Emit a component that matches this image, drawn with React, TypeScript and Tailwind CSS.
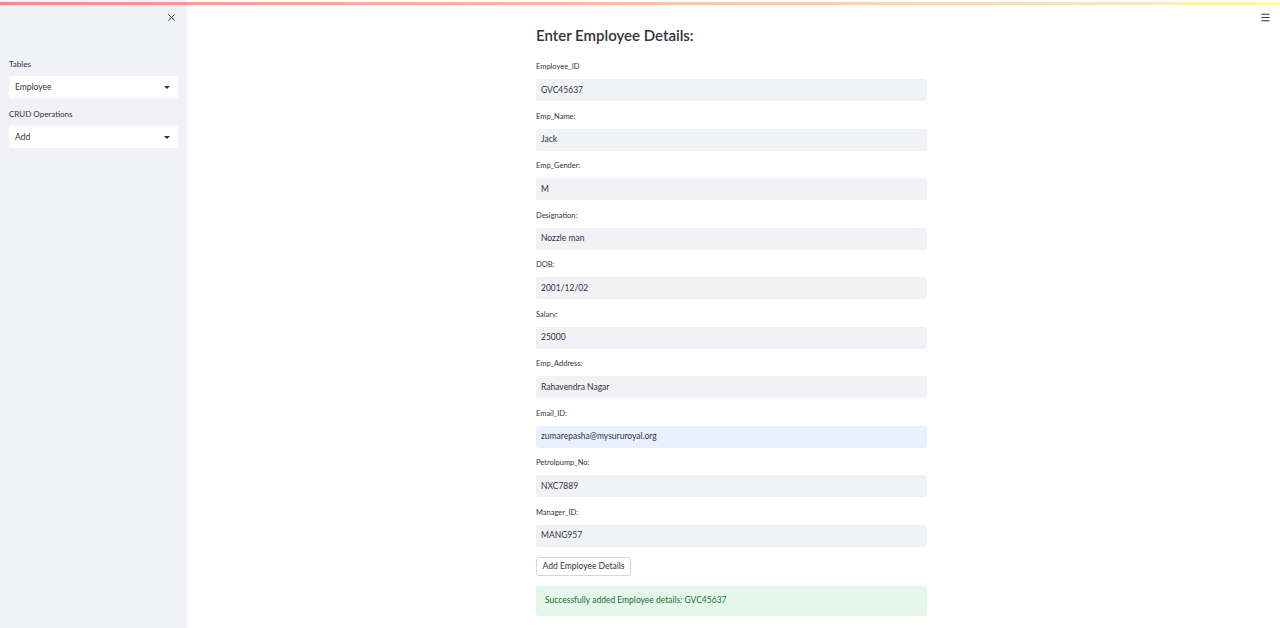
import { X, Menu } from 'lucide-react';

const fields = [
  { label: 'Employee_ID', value: 'GVC45637' },
  { label: 'Emp_Name:', value: 'Jack' },
  { label: 'Emp_Gender:', value: 'M' },
  { label: 'Designation:', value: 'Nozzle man' },
  { label: 'DOB:', value: '2001/12/02' },
  { label: 'Salary:', value: '25000' },
  { label: 'Emp_Address:', value: 'Rahavendra Nagar' },
  { label: 'Email_ID:', value: 'zumarepasha@mysururoyal.org', autofill: true },
  { label: 'Petrolpump_No:', value: 'NXC7889' },
  { label: 'Manager_ID:', value: 'MANG957' },
];

function SideSelect({ label, value }: { label: string; value: string }) {
  return (
    <div className="flex flex-col">
      <div className="h-[12px] leading-[12px] text-[8px] text-[#31333f] mb-[6px]">{label}</div>
      <div className="h-[22px] bg-white rounded-[3px] flex items-center justify-between pl-[6px] pr-[8px]">
        <span className="text-[8.5px] text-[#31333f]">{value}</span>
        <span className="w-0 h-0 border-l-[3px] border-r-[3px] border-t-[3px] border-l-transparent border-r-transparent border-t-[#31333f]" />
      </div>
    </div>
  );
}

export default function App() {
  return (
    <div
      className="relative w-[1280px] h-[628px] bg-white overflow-hidden flex"
      style={{ fontFamily: '"Source Sans Pro", Lato, "Noto Sans", sans-serif' }}
    >
      {/* top decoration */}
      <div className="absolute left-0 right-0 top-[2px] h-[3px] bg-gradient-to-r from-[#ff6b6b] via-[#ffb08a] to-[#fff3a0] opacity-80 z-10" />

      <aside className="w-[187px] h-full bg-[#f0f2f6] flex flex-col px-[9px]">
        <div className="flex justify-end pt-[12px] pr-[1px]">
          <X size={11} strokeWidth={2} className="text-[#31333f]" />
        </div>
        <div className="mt-[35px] flex flex-col gap-[10px]">
          <SideSelect label="Tables" value="Employee" />
          <SideSelect label="CRUD Operations" value="Add" />
        </div>
      </aside>

      <main className="flex-1 relative">
        <div className="absolute right-[9px] top-[12px]">
          <Menu size={11} strokeWidth={2.5} className="text-[#31333f]" />
        </div>
        <div className="w-[391px] ml-[349px] pt-[24px] flex flex-col">
          <h1 className="text-[15px] font-semibold text-[#31333f] leading-[22px] mb-[15px]">Enter Employee Details:</h1>
          <div className="flex flex-col gap-[9.5px]">
            {fields.map((f) => (
              <div key={f.label} className="flex flex-col">
                <div className="h-[12px] leading-[12px] text-[7.5px] text-[#31333f] mb-[6px]">{f.label}</div>
                <div
                  className={
                    'h-[22px] rounded-[3px] flex items-center px-[5px] text-[8.5px] text-[#31333f] ' +
                    (f.autofill ? 'bg-[#e8f0fe] text-[#1e1e1e]' : 'bg-[#f0f2f6]')
                  }
                >
                  {f.value}
                </div>
              </div>
            ))}
          </div>
          <div className="mt-[10px]">
            <button className="h-[19px] w-[95px] border border-[#d6d6d9] rounded-[3px] bg-white text-[8.5px] text-[#31333f] flex items-center justify-center">
              Add Employee Details
            </button>
          </div>
          <div className="mt-[10px] h-[30px] bg-[#e5f6ea] rounded-[3px] flex items-center px-[9px] text-[8.5px] text-[#1d6b38]">
            Successfully added Employee details: GVC45637
          </div>
        </div>
      </main>
    </div>
  );
}
